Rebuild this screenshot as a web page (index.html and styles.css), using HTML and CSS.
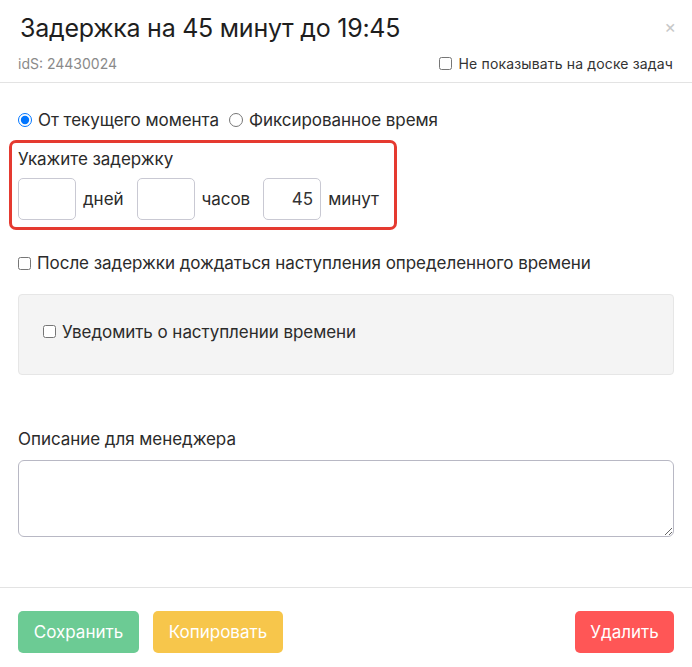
FILE: index.html
```html
<!DOCTYPE html>
<html lang="ru">
<head>
<meta charset="utf-8">
<link rel="stylesheet" href="styles.css">
</head>
<body>
<div class="modal">
  <header class="modal-header">
    <div class="title-row">
      <h1 class="title">Задержка на 45 минут до 19:45</h1>
      <span class="close">×</span>
    </div>
    <div class="sub-row">
      <span class="ids">idS: 24430024</span>
      <label class="check"><input type="checkbox"> Не показывать на доске задач</label>
    </div>
  </header>
  <main class="modal-body">
    <div class="radio-row">
      <label class="check"><input type="radio" name="mode" checked> От текущего момента</label>
      <label class="check"><input type="radio" name="mode"> Фиксированное время</label>
    </div>
    <div class="delay-box">
      <div class="delay-label">Укажите задержку</div>
      <div class="delay-inputs">
        <input class="num" type="text" value="">
        <span class="unit">дней</span>
        <input class="num" type="text" value="">
        <span class="unit">часов</span>
        <input class="num" type="text" value="45">
        <span class="unit">минут</span>
      </div>
    </div>
    <label class="check wait-row"><input type="checkbox"> После задержки дождаться наступления определенного времени</label>
    <div class="gray-box">
      <label class="check"><input type="checkbox"> Уведомить о наступлении времени</label>
    </div>
    <div class="desc-label">Описание для менеджера</div>
    <textarea class="desc"></textarea>
  </main>
  <footer class="modal-footer">
    <button class="btn green">Сохранить</button>
    <button class="btn yellow">Копировать</button>
    <span class="spacer"></span>
    <button class="btn red">Удалить</button>
  </footer>
</div>
</body>
</html>
```

FILE: styles.css
```css
* { box-sizing: border-box; }
html, body { margin: 0; padding: 0; background: #fff; }
body {
  font-family: Inter, "Noto Sans", sans-serif;
  color: #2b2b2b;
  font-size: 17px;
  letter-spacing: -0.05px;
}
.modal { width: 692px; }
.modal-header {
  border-bottom: 1px solid #e3e3e3;
  padding: 10px 18px 8px 18px;
}
.title-row { display: flex; justify-content: space-between; align-items: flex-start; }
.title {
  margin: 0;
  padding-left: 2px;
  font-size: 25px;
  font-weight: 400;
  line-height: 36px;
  color: #1e1e1e;
  letter-spacing: -0.25px;
}
.close {
  color: #c8c8c8;
  font-size: 18px;
  line-height: 18px;
  margin-top: 8px;
  margin-right: -2px;
}
.sub-row {
  display: flex;
  justify-content: space-between;
  align-items: center;
  margin-top: 6px;
  height: 22px;
}
.ids { color: #8a8a8a; font-size: 14px; letter-spacing: 0; }
.sub-row .check { font-size: 14px; color: #333; letter-spacing: 0.15px; margin-right: 1px; }
.sub-row .check { gap: 7px; }
.check {
  display: inline-flex;
  align-items: center;
  gap: 6px;
  cursor: pointer;
}
.check input { margin: 0; width: 13px; height: 13px; }
.modal-body { padding: 25px 18px 0 18px; }
.radio-row { display: flex; gap: 10px; height: 24px; align-items: center; }
.radio-row input { width: 14px; height: 14px; }
.delay-box {
  margin: 8px 0 0 -9px;
  width: 388px;
  height: 90px;
  border: 3px solid #e53a30;
  border-radius: 7px;
  padding: 5px 6px 0 6px;
}
.delay-label { line-height: 22px; }
.delay-inputs { display: flex; align-items: center; margin-top: 8px; }
.num {
  width: 58px;
  height: 42px;
  border: 1px solid #c9c9d3;
  border-radius: 5px;
  font: inherit;
  text-align: right;
  padding: 0 7px;
  color: #333;
}
.unit { margin: 0 13px 0 7px; }
.unit:nth-of-type(1) { margin-right: 13px; }
.wait-row { margin-top: 21px; height: 24px; }
.gray-box {
  margin-top: 19px;
  height: 81px;
  background: #f4f4f4;
  border: 1px solid #e6e6e6;
  border-radius: 4px;
  padding: 0 24px 6px 24px;
  display: flex;
  align-items: center;
}
.desc-label { margin-top: 53px; line-height: 22px; }
.desc {
  display: block;
  margin-top: 10px;
  width: 100%;
  height: 77px;
  border: 1px solid #b8b8c4;
  border-radius: 6px;
  font: inherit;
  resize: vertical;
}
.modal-footer {
  margin-top: 50px;
  border-top: 1px solid #e3e3e3;
  padding: 23px 18px;
  display: flex;
  gap: 14px;
}
.spacer { flex: 1; }
.btn {
  height: 42px;
  border: 0;
  border-radius: 5px;
  color: #fff;
  font: inherit;
  padding: 0 15px;
}
.green { background: #6ccb94; width: 121px; }
.yellow { background: #f7c64b; width: 130px; }
.red { background: #ff5656; width: 99px; }
```
